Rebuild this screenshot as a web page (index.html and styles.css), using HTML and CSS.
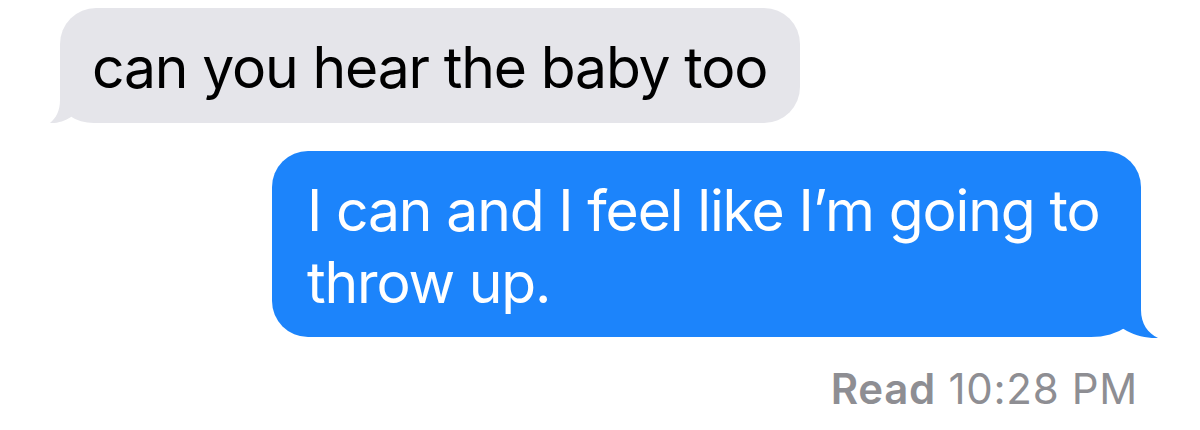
FILE: index.html
```html
<!DOCTYPE html>
<html lang="en">
<head>
  <meta charset="UTF-8" />
  <meta name="viewport" content="width=device-width, initial-scale=1.0">
  <title>Messages</title>
  <link rel="stylesheet" href="styles.css">
</head>
<body>
  <div class="thread">
    <div class="bubble received">
      can you hear the baby too
      <svg class="tail" width="40" height="40" viewBox="0 0 40 40">
        <path d="M12,0 L12,16 C12,27 8,34 2,39 C9,39.5 17,37 23,33 L23,0 Z" />
      </svg>
    </div>

    <div class="bubble sent">
      I can and I feel like I’m going to throw up.
      <svg class="tail" width="60" height="60" viewBox="0 0 60 60">
        <path d="M40,0 L40,31 C40,45 47,54 57,59 C47,59.5 35,57 26,52 L21,49 L21,0 Z" />
      </svg>
    </div>

    <p class="receipt"><b>Read</b> 10:28 PM</p>
  </div>
</body>
</html>
```

FILE: styles.css
```css
body {
  margin: 0;
  background: #fff;
  font-family: Inter, 'Noto Sans', sans-serif;
}

.thread {
  display: flex;
  flex-direction: column;
  padding-top: 8px;
}

.bubble {
  position: relative;
  box-sizing: border-box;
  width: fit-content;
  font-size: 57px;
  line-height: 72px;
  letter-spacing: -1.15px;
  border-radius: 36px;
}

.bubble .tail {
  position: absolute;
}

/* bulle grise, à gauche */
.received {
  align-self: flex-start;
  margin-left: 60px;
  padding: 24px 33px 19px 32px;
  background: #e5e5ea;
  color: #000;
  border-bottom-left-radius: 34px 24px;
}

.received .tail {
  left: -12px;
  bottom: -1px;
  fill: #e5e5ea;
}

/* bulle bleue, à droite */
.sent {
  align-self: flex-end;
  margin-top: 28px;
  margin-right: 59px;
  max-width: 869px;
  padding: 24px 35px 18px;
  background: #1c84fb;
  color: #fff;
  border-bottom-right-radius: 50px 34px;
}

.sent .tail {
  right: -20px;
  bottom: -2px;
  fill: #1c84fb;
}

.receipt {
  align-self: flex-end;
  margin: 28px 62px 0 0;
  font-size: 42px;
  line-height: 48px;
  letter-spacing: 0.7px;
  color: #8e8e93;
}

.receipt b {
  font-weight: 600;
}
```
